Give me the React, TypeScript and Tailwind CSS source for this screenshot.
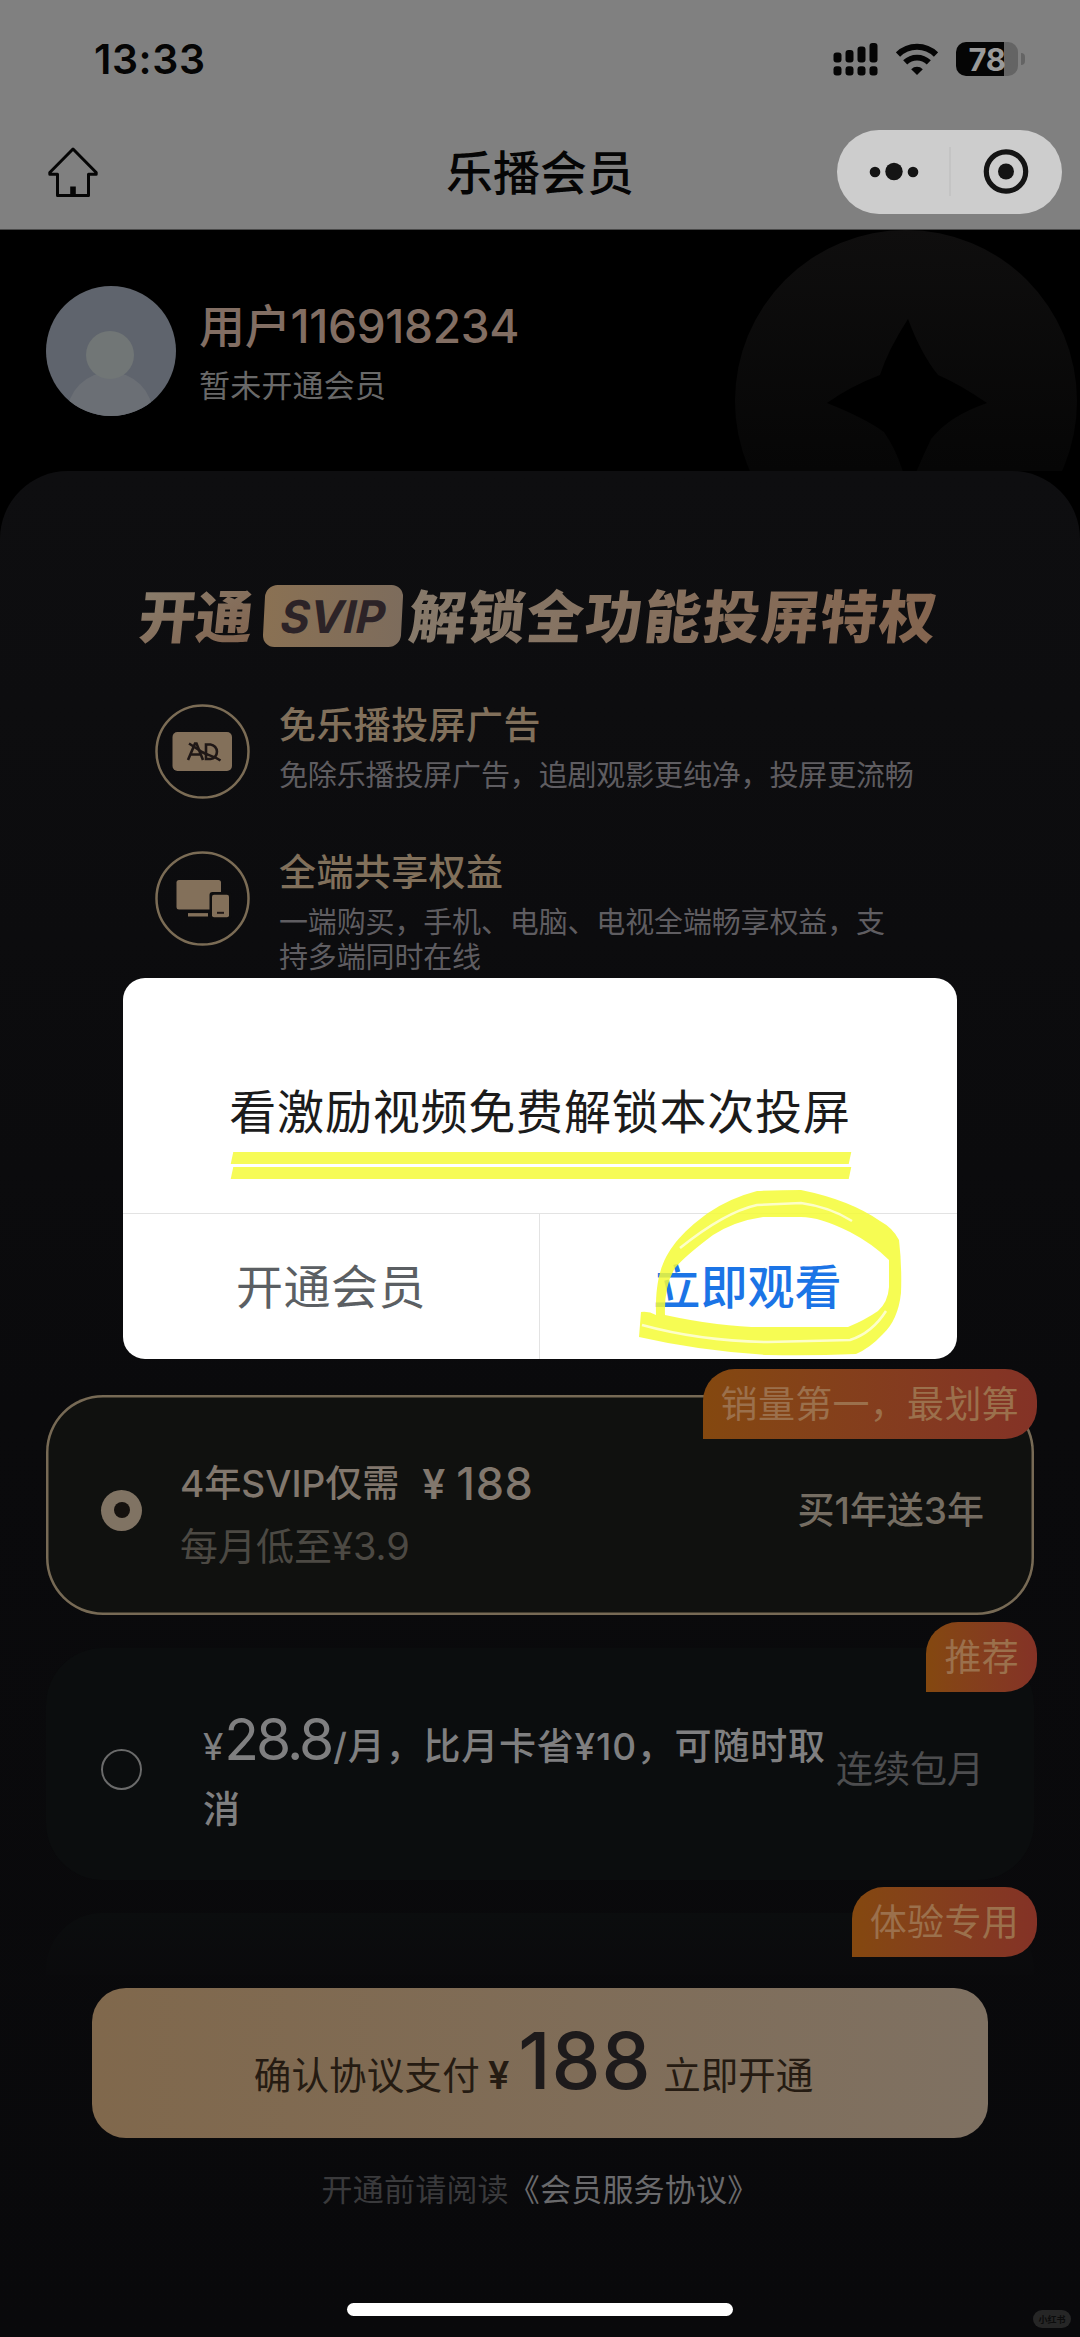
import type { ReactNode } from "react";

const SignalIcon = () => (
  <svg className="h-[34px] w-[45px]" viewBox="0 0 45 34" fill="#050505">
    <rect x="0.5" y="10.5" width="8" height="10" rx="3" />
    <rect x="12.5" y="8" width="8" height="12.5" rx="3" />
    <rect x="24.5" y="4.5" width="8" height="16" rx="3" />
    <rect x="36.5" y="1" width="8" height="19.5" rx="3" />
    <rect x="0.5" y="24.2" width="8" height="9.3" rx="3" />
    <rect x="12.5" y="24.2" width="8" height="9.3" rx="3" />
    <rect x="24.5" y="24.2" width="8" height="9.3" rx="3" />
    <rect x="36.5" y="24.2" width="8" height="9.3" rx="3" />
  </svg>
);

const WifiIcon = () => (
  <svg className="h-[34px] w-[42px]" viewBox="0 0 42 34" fill="none" stroke="#050505">
    <path d="M2 12.6a27 27 0 0 1 38 0" strokeWidth="6" />
    <path d="M9.2 20.4a16.8 16.8 0 0 1 23.6 0" strokeWidth="5.8" />
    <path d="M21 33l-5.8-5.8a8.2 8.2 0 0 1 11.6 0z" fill="#050505" stroke="none" />
  </svg>
);

const Battery = () => (
  <div className="flex items-center gap-[3px]">
    <div className="flex h-[34px] w-[62px] items-center justify-center overflow-hidden rounded-[10px] bg-linear-to-r from-[#050505] from-[78%] to-[#646464] to-[78%]">
      <span className="text-[31px] font-bold leading-none tracking-[-0.5px] text-[#9a9a9a]">78</span>
    </div>
    <div className="h-[12px] w-[4px] rounded-r-full bg-[#646464]" />
  </div>
);

const Header = () => (
  <header className="h-[230px] border-b border-[#4a4a4a] bg-[#808080] text-[#050505]">
    {/* Status bar */}
    <div className="flex h-[118px] items-center justify-between pl-[94px] pr-[55px]">
      <span className="text-[41px] font-semibold leading-none tracking-[0.6px]">13:33</span>
      <div className="flex items-center gap-[18px]">
        <SignalIcon />
        <WifiIcon />
        <Battery />
      </div>
    </div>

    {/* Mini program nav */}
    <div className="flex h-[108px] items-center justify-between px-[18px]">
      <div className="w-[225px] pl-[29px]">
        <svg className="h-[52px] w-[52px]" viewBox="0 0 52 52" fill="none">
          <path
            d="M26 3 2.8 26.5v1.8H10.5V49.5H41.5V28.3H49.2V26.5z"
            stroke="#050505"
            strokeWidth="3"
            strokeLinejoin="round"
          />
          <path d="M23.2 40.5h5.6v9h-5.6z" fill="#050505" />
        </svg>
      </div>
      <h1 className="text-[47px] font-medium leading-none">乐播会员</h1>
      <div className="flex h-[84px] w-[225px] items-center rounded-full bg-[#cdcdcd]">
        <svg className="h-[84px] w-[225px]" viewBox="0 0 225 84" fill="#141414">
          <circle cx="38" cy="42" r="5.3" />
          <circle cx="57" cy="41.5" r="8.7" />
          <circle cx="76" cy="42" r="5.3" />
          <path d="M113 17v49" stroke="#c0c0c0" strokeWidth="1.5" />
          <circle cx="169" cy="41.5" r="19.7" fill="none" stroke="#141414" strokeWidth="5.2" />
          <circle cx="169" cy="41.5" r="8" />
        </svg>
      </div>
    </div>
  </header>
);

const UserCard = () => (
  <section className="relative flex h-[241px] overflow-hidden pl-[46px] pt-[56px]">
    <svg className="absolute right-[3px] top-0 h-[342px] w-[342px]" viewBox="0 0 342 342">
      <defs>
        <linearGradient id="medal" x1="0" y1="0" x2="0" y2="1">
          <stop offset="0" stopColor="#0f0e0e" />
          <stop offset="0.7" stopColor="#060606" />
        </linearGradient>
      </defs>
      <circle cx="171" cy="171" r="171" fill="url(#medal)" />
      <path
        d="M173 89Q186 124 203 145Q224 154 252 173Q214 186 196 209Q184 234 173 262Q166 226 149 202Q130 188 92 173Q116 156 145 145Q153 120 173 89z"
        fill="#000"
      />
    </svg>
    <svg className="h-[130px] w-[130px]" viewBox="0 0 130 130">
      <clipPath id="face">
        <circle cx="65" cy="65" r="65" />
      </clipPath>
      <g clipPath="url(#face)">
        <rect width="130" height="130" fill="#5f646d" />
        <circle cx="64" cy="129" r="43" fill="#6b6f75" />
        <circle cx="64" cy="69" r="24" fill="#717676" />
      </g>
    </svg>
    <div className="ml-[23px] mt-[10px]">
      <p className="text-[46px] font-medium leading-[60px] tracking-[-0.3px] text-[#826e63]">
        用户116918234
      </p>
      <p className="mt-[10px] text-[31px] leading-[40px] tracking-[0.2px] text-[#696969]">暂未开通会员</p>
    </div>
  </section>
);

const AdIcon = () => (
  <svg className="h-[95px] w-[95px]" viewBox="0 0 95 95" fill="none">
    <circle cx="47.5" cy="47.5" r="46" stroke="#7b6c55" strokeWidth="2.5" />
    <rect x="17.5" y="28" width="59.5" height="39" rx="5" fill="#83705a" />
    <g stroke="#1f1716" strokeWidth="2.6">
      <path d="M33 56l7-16.500h1.500L48 56M35.500 50.500h10" />
      <path d="M51 40.500v14.500h4.500a7.300 7.300 0 0 0 0-14.500z" />
      <path d="M34 39.500l13 8.500c7 4 10 3 18.500 8.500" />
    </g>
  </svg>
);

const DevicesIcon = () => (
  <svg className="h-[95px] w-[95px]" viewBox="0 0 95 95" fill="none">
    <circle cx="47.5" cy="47.5" r="46" stroke="#7b6c55" strokeWidth="2.5" />
    <rect x="21.5" y="29" width="44.5" height="29.5" rx="2.5" fill="#83705a" />
    <path d="M33 63.800h20" stroke="#83705a" strokeWidth="3.4" />
    <rect x="54.5" y="41" width="22" height="27" rx="3" fill="#0d0d0e" />
    <rect x="57" y="43.800" width="17" height="22.5" rx="2" fill="#83705a" />
    <path d="M62 61.800h7" stroke="#1f1716" strokeWidth="2" />
  </svg>
);

const Feature = ({ icon, title, lines }: { icon: ReactNode; title: string; lines: string[] }) => (
  <div className="flex h-[147px] gap-[29px]">
    {icon}
    <div className="whitespace-nowrap">
      <h3 className="text-[37px] font-medium leading-[43px] tracking-[0.4px] text-[#81705b]">{title}</h3>
      <div className="mt-[11px] text-[29px] leading-[35px] tracking-[-0.15px] text-[#5f5d61]">
        {lines.map((line) => (
          <p key={line}>{line}</p>
        ))}
      </div>
    </div>
  </div>
);

const Tag = ({ children }: { children: ReactNode }) => (
  <span className="absolute -right-[3px] -top-[26px] flex h-[70px] items-center whitespace-nowrap rounded-[32px] rounded-bl-none bg-linear-to-r from-[#84480f] to-[#843226] px-[18px] text-[37px] leading-none tracking-[0.3px] text-[#9b704c]">
    {children}
  </span>
);

const Plans = () => (
  <div className="mx-[46px] flex flex-col gap-[33px]">
    <div className="relative flex h-[220px] items-center rounded-[57px] bg-[#10110f] pl-[55px] pr-[50px] inset-ring-[2.5px] inset-ring-[#776a55]">
      <Tag>销量第一，最划算</Tag>
      <span className="mt-[10px] flex h-[41px] w-[41px] items-center justify-center rounded-full bg-[#807363]">
        <span className="h-[16px] w-[16px] rounded-full bg-[#15110e]" />
      </span>
      <div className="ml-[38px] mt-[20px] flex-1">
        <p className="flex items-center text-[37px] font-medium leading-[50px] text-[#81776d]">
          <span>4年SVIP仅需</span>
          <span className="ml-[23px] text-[41px] font-semibold">¥</span>
          <span className="ml-[11px] text-[45px] tracking-[0.6px]">188</span>
        </p>
        <p className="mt-[12px] text-[38px] leading-[50px] text-[#4c4943]">每月低至¥3.9</p>
      </div>
      <span className="mt-[11px] text-[37px] font-medium leading-none text-[#756d62]">买1年送3年</span>
    </div>

    <div className="relative flex h-[232px] items-center rounded-[57px] bg-[#0b0d0e] pl-[55px] pr-[50px]">
      <Tag>推荐</Tag>
      <span className="mt-[11px] h-[41px] w-[41px] shrink-0 rounded-full border-[2.5px] border-[#6b6b6b]" />
      <div className="ml-[61px] mt-[24px] flex-1 whitespace-nowrap text-[37px] font-medium leading-[63px] tracking-[0.8px] text-[#7f7f80]">
        <p>
          <span className="font-normal">¥</span>
          <span className="text-[57px] font-normal leading-none tracking-[-3px]">28.8</span>
          <span className="ml-[2px]">/月，比月卡省¥10，可随时取</span>
        </p>
        <p>消</p>
      </div>
      <span className="mt-[11px] text-[37px] leading-none text-[#4d4d4f]">连续包月</span>
    </div>

    <div className="relative h-[62px] rounded-t-[57px] bg-linear-to-b from-[#0b0d0e] to-[#0a0a0c]">
      <Tag>体验专用</Tag>
    </div>
  </div>
);

const Footer = () => (
  <footer className="mt-[13px] flex flex-col items-center">
    <button className="flex h-[150px] w-[896px] items-baseline justify-center whitespace-nowrap rounded-[34px] bg-linear-to-r from-[#80684c] to-[#7f7162] pr-[13px] text-[37.5px] leading-[150px] text-[#251b12]">
      <span className="relative top-[12px] tracking-[0.2px]">确认协议支付</span>
      <span className="relative top-[12px] ml-[8px] text-[38px] font-semibold">¥</span>
      <span className="relative top-[12px] ml-[9px] text-[78px] font-medium leading-none tracking-[0.8px] text-[#1d1a1b]">188</span>
      <span className="relative top-[12px] ml-[12px]">立即开通</span>
    </button>
    <p className="mt-[32px] whitespace-nowrap text-[31px] leading-[40px] tracking-[0.2px] text-[#6a6a6c]">
      <span className="text-[#3a3a3c]">开通前请阅读</span>《会员服务协议》
    </p>
    <div className="mt-[93px] h-[13px] w-[386px] rounded-full bg-white" />
  </footer>
);

const Dialog = () => (
  <div className="absolute inset-0 flex items-center justify-center">
    <div className="relative flex h-[381px] w-[834px] flex-col overflow-hidden rounded-[22px] bg-white">
      <div className="flex h-[236px] flex-col items-center border-b border-[#e3e3e3] pt-[104px]">
        <p className="text-[47px] leading-[60px] tracking-[0.8px] text-[#1b1b1b]">看激励视频免费解锁本次投屏</p>
        <div className="ml-[2px] mt-[10px] flex w-[618px] flex-col gap-[3px]">
          <div className="h-[12px] -skew-x-12 bg-[#f6fb57]" />
          <div className="h-[12px] -skew-x-12 bg-[#f6fb57]" />
        </div>
      </div>
      <div className="grid flex-1 grid-cols-2 text-[47px] leading-none">
        <button className="border-r border-[#e3e3e3] tracking-[0.5px] text-[#5b5f63]">开通会员</button>
        <button className="pr-[2px] font-medium text-[#1b74e6]">立即观看</button>
      </div>
      {/* Highlighter loop around the watch button */}
      <svg className="absolute left-[514px] top-[210px] h-[170px] w-[266px]" viewBox="637 1188 266 170" fill="none">
        <path
          d="M656 1315C655 1270 664 1245 708 1213Q730 1198 757 1191Q780 1190 801 1190Q850 1200 880 1221Q893 1228 899 1240Q902 1265 901 1293Q898 1320 883 1334Q870 1348 856 1354Q810 1356 768 1355Q700 1351 639 1337L641 1312Q649 1311 656 1315zM665 1315Q725 1328 768 1327L848 1327Q865 1320 878 1311Q888 1302 889 1287V1260Q873 1244 850 1232Q820 1217 801 1217L763 1217Q735 1221 713 1235Q685 1256 675 1268Q664 1286 665 1315z"
          fill="#f5fb35"
          fillOpacity="0.85"
          fillRule="evenodd"
        />
        <path
          d="M680 1248Q725 1212 757 1205L801 1203Q830 1207 852 1221M642 1325Q700 1341 768 1342L850 1340Q872 1333 886 1311"
          stroke="#fdfec8"
          strokeWidth="2.5"
        />
      </svg>
    </div>
  </div>
);

export default function App() {
  return (
    <main className="relative h-[2337px] w-[1080px] overflow-hidden bg-black font-[Inter,'Noto_Sans_CJK_SC',sans-serif]">
      <Header />
      <UserCard />
      <section className="h-[1866px] rounded-t-[68px] bg-linear-to-b from-[#0e0e10] via-[#0a0a0c] via-50% to-[#09090b] pt-[114px]">
        {/* Title */}
        <div className="flex h-[62px] items-center whitespace-nowrap pl-[139px]">
          <span className="relative top-[2px] -skew-x-6 bg-linear-to-br from-[#8a7e6d] to-[#80614c] bg-clip-text text-[57px] font-black leading-[62px] text-transparent">
            开通
          </span>
          <span className="ml-[11px] flex h-[62px] w-[138px] -skew-x-3 items-center justify-center rounded-[12px] bg-linear-to-r from-[#8a7153] to-[#7d6c5c] text-[45px] font-bold italic leading-none text-[#2c2327]">
            SVIP
          </span>
          <span className="relative top-[2px] ml-[7px] -skew-x-6 bg-linear-to-r from-[#86796a] to-[#84654f] bg-clip-text text-[57px] font-black leading-[62px] tracking-[1.8px] text-transparent">
            解锁全功能投屏特权
          </span>
        </div>

        {/* Features */}
        <div className="mt-[57px] h-[691px] pl-[155px]">
          <Feature
            icon={<AdIcon />}
            title="免乐播投屏广告"
            lines={["免除乐播投屏广告，追剧观影更纯净，投屏更流畅"]}
          />
          <Feature
            icon={<DevicesIcon />}
            title="全端共享权益"
            lines={["一端购买，手机、电脑、电视全端畅享权益，支", "持多端同时在线"]}
          />
        </div>

        <Plans />
        <Footer />
      </section>

      <Dialog />
      <span className="absolute bottom-[9px] right-[9px] flex h-[18px] w-[38px] items-center justify-center rounded-full bg-[#262626] text-[9px] font-bold leading-none text-[#0c0c0c]">
        小红书
      </span>
    </main>
  );
}
